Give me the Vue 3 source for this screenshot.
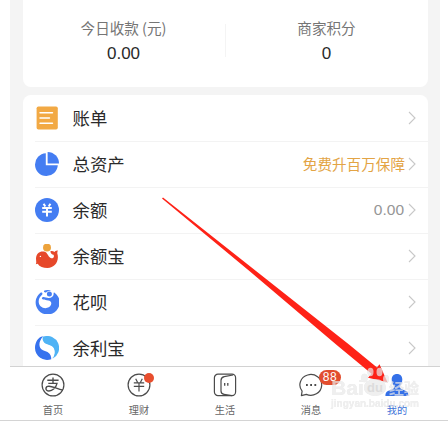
<script setup>
const rows = [
  { icon: 'bill', name: '账单' },
  { icon: 'asset', name: '总资产', note: '免费升百万保障', tone: 'gold' },
  { icon: 'balance', name: '余额', note: '0.00', tone: 'grey' },
  { icon: 'yuebao', name: '余额宝' },
  { icon: 'huabei', name: '花呗' },
  { icon: 'yulibao', name: '余利宝' },
]
const tabs = [
  { icon: 'home', name: '首页' },
  { icon: 'wealth', name: '理财', dot: true },
  { icon: 'life', name: '生活' },
  { icon: 'message', name: '消息', badge: '88' },
  { icon: 'mine', name: '我的', active: true },
]
</script>

<template>
  <div class="screen">
    <main class="content">
      <section class="card stats">
        <div class="stat">
          <span class="stat-label">今日收款<span class="unit">(元)</span></span>
          <span class="stat-value">0.00</span>
        </div>
        <i class="split"></i>
        <div class="stat">
          <span class="stat-label">商家积分</span>
          <span class="stat-value">0</span>
        </div>
      </section>

      <section class="card list">
        <div v-for="row in rows" :key="row.icon" class="row">
          <svg class="row-icon" viewBox="0 0 24 24">
            <g v-if="row.icon === 'bill'">
              <rect x="1.6" y="0.5" width="21.2" height="23" rx="1.8" fill="#f2a944" />
              <path d="M5 6.8H17.5M5 12H14.5M5 17.2H17.5" stroke="#fff" stroke-width="1.4" stroke-linecap="round" />
            </g>
            <g v-else-if="row.icon === 'asset'" fill="#447df2">
              <path d="M10.8 1.2A11.4 11.4 0 1 0 22.8 13.2H10.8Z" />
              <path d="M12.6 0A11.4 11.4 0 0 1 24 11.4H12.6Z" />
            </g>
            <g v-else-if="row.icon === 'balance'">
              <circle cx="12" cy="12" r="12" fill="#447df2" />
              <path d="M8.6 5.8L10.3 8.6M15.4 5.8L13.7 8.6M7.2 10H16.8M7.2 13.8H16.8M12 9.5V18.5" stroke="#fff" stroke-width="2" fill="none" />
            </g>
            <g v-else-if="row.icon === 'yuebao'">
              <circle cx="12" cy="3.6" r="4" fill="#eda33c" />
              <path d="M1 14.5C1.2 9.5 5 6.8 9 7.6C13 8.4 13.3 14 16.3 14.2C18.8 14.3 19.5 12.2 18.5 10.8C17 10.5 15.5 9.4 15.4 7.2C17 6.8 18.5 7.2 19.5 8.1C20 7 21.2 6.2 22.8 6.5C22.4 7.8 22.2 8.6 22.3 9.6C24.6 16.5 20 24 12.5 24C8 24 4.6 22.6 2.7 19.7L.8 20.2C1.7 18.5 1 17 1 14.5Z" fill="#e6482a" />
              <circle cx="5.4" cy="12.4" r=".7" fill="#fff" />
            </g>
            <g v-else-if="row.icon === 'huabei'" fill="#447df2">
              <path d="M5.8 2.6C7.4 2.2 8 3.8 6.8 5C3.2 8.2 2.6 13.2 5.6 16.2C8.8 19.4 14.6 18.4 16 14.8C16.9 12.4 15.6 11 13.4 10.6C11 10.1 9.6 9.3 8.2 9.4C6.6 9.4 6.4 7.4 8 7C10 6.8 11.4 8 13.6 8C17 8 19 6.2 18.6 3.4C18.5 2.6 18.9 2.2 19.6 2.7A12 12 0 1 1 5.8 2.6Z" />
              <circle cx="14.4" cy="3.9" r="2.5" />
              <path d="M9.4 .5A12 12 0 0 1 16.4 .8C14 .6 12.2 1.6 11 2.4C9.5 3.2 8.2 1.4 9.4 .5Z" />
            </g>
            <g v-else>
              <path d="M8.3.6C4-.1 0 6 0 12A12 12 0 0 0 16.2 23.2C18.6 20.2 18.3 16.5 15.8 15.2L9 12.7C3.8 10.5 5.4 3.5 8.3.6Z" fill="#3672ee" />
              <path d="M8.3.6A12 12 0 0 1 17.5 22.7C21 17.7 20 11.5 15 9.7L11 8.2C6.8 6.5 6 3.5 8.3.6Z" fill="#4fb3f5" />
              <path d="M7.7 1C3.4 5.4 3.2 12.3 8 14.3L12.5 16C15.5 17.6 16.4 20.6 16.2 23.4C20.7 18.5 20.8 11.7 16 9.7L11.5 8C8 6.6 7.2 3.4 7.7 1Z" fill="#fff" />
            </g>
          </svg>
          <div class="row-body">
            <span class="row-name">{{ row.name }}</span>
            <span v-if="row.note" class="note" :class="row.tone">{{ row.note }}</span>
            <svg class="chevron" viewBox="0 0 8 14"><path d="M1 1L7 7L1 13" /></svg>
          </div>
        </div>
      </section>
    </main>

    <nav class="tabbar">
      <div v-for="tab in tabs" :key="tab.icon" class="tab" :class="{ active: tab.active }">
        <div class="tab-icon">
          <svg viewBox="0 0 24 24" fill="none" stroke="#4b4b4b" stroke-width="1.2">
            <g v-if="tab.icon === 'home'">
              <circle cx="12" cy="12" r="10.9" />
              <path d="M12 4.6V10M6.3 7.2H17.6M7.3 10.3H16C14.8 15.5 11 18 8 18C3.8 18 4 13.3 8 13.2C12 13.2 16.5 16.3 22 17.1" stroke-width="1.35" />
            </g>
            <g v-else-if="tab.icon === 'wealth'">
              <circle cx="12" cy="12" r="10.9" />
              <path d="M8.7 5.8L10.5 9.3M15.3 5.8L13.5 9.3M6.8 9.8H17.2M6.8 13.3H17.2M12 9.8V18.5" />
            </g>
            <g v-else-if="tab.icon === 'life'">
              <rect x="1.4" y="1.2" width="21.2" height="21.4" rx="3.6" />
              <path d="M20 2L11.2 3.7Q8 4.5 8 7.5V18Q8 20.8 11 21.3L19 22.6" />
              <path d="M11.7 10V12.8M14.8 10V12.8" stroke-width="1.3" />
            </g>
            <g v-else-if="tab.icon === 'message'">
              <path d="M2.4 22.6L3.1 18.2A10.9 10.4 0 1 1 7.3 21.4Z" stroke-linejoin="round" />
              <path d="M7 12H8.8M11.2 12H13M15.4 12H17.2" stroke-width="1.8" />
            </g>
            <g v-else fill="#3470e8" stroke="none">
              <path d="M12 1C8.7 1 6.7 3.2 6.7 6.5C6.7 9.5 8 12 9.3 13C9.3 15 8.5 15.8 6.5 16.5C3 17.7.4 18.5.4 23H23.6C23.6 18.5 21 17.7 17.5 16.5C15.5 15.8 14.7 15 14.7 13C16 12 17.3 9.5 17.3 6.5C17.3 3.2 15.3 1 12 1Z" />
            </g>
          </svg>
          <i v-if="tab.dot" class="dot"></i>
          <b v-if="tab.badge" class="badge">{{ tab.badge }}</b>
        </div>
        <span class="tab-name">{{ tab.name }}</span>
      </div>
    </nav>

    <svg class="overlay" viewBox="0 0 448 421">
      <path d="M162 198.5L163 197.4L349 344.5L377 367.5L379.5 364.2L387.5 382.3L368 377.7L371.5 373.7L337 345.3L250 271.5Z" fill="#fe2217" />
      <g class="mark">
        <text class="mark-brand" x="331" y="394.5" textLength="33" lengthAdjust="spacingAndGlyphs">Bai</text>
        <ellipse cx="375" cy="387.5" rx="11" ry="8.5" />
        <ellipse cx="364.5" cy="378" rx="3.2" ry="4.2" />
        <ellipse cx="370.5" cy="372" rx="3" ry="4.2" />
        <ellipse cx="379.5" cy="372" rx="3" ry="4.2" />
        <ellipse cx="386" cy="379" rx="3" ry="4" />
        <text class="mark-cn" x="389" y="394" textLength="30">经验</text>
        <text class="mark-url" x="331" y="406.5" textLength="88" lengthAdjust="spacingAndGlyphs">jingyan.baidu.com</text>
      </g>
      <text class="mark-du" x="367" y="392">du</text>
    </svg>
  </div>
</template>

<style>
body {
  margin: 0;
  background: #fff;
}
</style>

<style scoped>
.screen {
  position: relative;
  box-sizing: border-box;
  display: flex;
  flex-direction: column;
  height: 421px;
  padding: 0 8px 0 10px;
  overflow: hidden;
  border-bottom: 1px solid #d4d4d4;
  background: #fff;
  color: #2a2a2a;
  font-family: "Noto Sans CJK SC", sans-serif;
  font-weight: 400;
}
.content {
  box-sizing: border-box;
  display: flex;
  flex-direction: column;
  gap: 8px;
  height: 366px;
  padding: 0 12.5px;
  overflow: hidden;
  background: #f4f4f4;
}
.card {
  flex: none;
  background: #fff;
}
.stats {
  box-sizing: border-box;
  display: flex;
  height: 87px;
  padding-top: 17px;
  border-radius: 0 0 8px 8px;
}
.stat {
  display: flex;
  flex: 1;
  flex-direction: column;
  align-items: center;
}
.stat-label {
  color: #757575;
  font-size: 14.6px;
  line-height: 21px;
}
.unit {
  margin-left: 3px;
}
.stat-value {
  font-family: "Liberation Sans", sans-serif;
  font-size: 17px;
  line-height: 31px;
}
.split {
  width: 1px;
  height: 33px;
  margin-top: 7px;
  background: #f4f4f4;
}
.list {
  border-radius: 8px 8px 0 0;
}
.row {
  display: flex;
  gap: 13.5px;
  align-items: center;
  height: 46px;
  padding-left: 12.5px;
}
.row-icon {
  flex: none;
  width: 24px;
  height: 24px;
}
.row-body {
  display: flex;
  flex: 1;
  align-items: center;
  height: 100%;
  padding-right: 11.5px;
}
.row + .row {
  background: linear-gradient(#f3f3f3, #f3f3f3) 12.5px 0 / 100% 1px no-repeat;
}
.row-name {
  flex: 1;
  padding-bottom: 2px;
  font-size: 17.4px;
}
.note {
  margin-right: 3px;
  padding-bottom: 2px;
  font-size: 14.6px;
}
.gold {
  color: #e3a445;
}
.grey {
  margin-right: 4px;
  padding-bottom: 0;
  color: #969696;
  font-family: "Liberation Sans", sans-serif;
  font-size: 15.5px;
}
.chevron {
  width: 8px;
  height: 14px;
  fill: none;
  stroke: #c8c8c8;
  stroke-width: 1.1;
}
.tabbar {
  display: flex;
  flex: 1;
  border-top: 1px solid #d2d2d2;
}
.tab {
  display: flex;
  flex: 1;
  flex-direction: column;
  align-items: center;
  padding-top: 6px;
}
.tab-icon {
  position: relative;
  width: 24px;
  height: 24px;
}
.tab-icon svg {
  display: block;
  width: 24px;
  height: 24px;
}
.dot {
  position: absolute;
  top: 0;
  right: -3px;
  width: 10px;
  height: 10px;
  border-radius: 50%;
  background: #e84e2e;
}
.badge {
  position: absolute;
  top: -3px;
  left: 20px;
  width: 22px;
  height: 15px;
  border-radius: 8px;
  background: #e24d2e;
  color: #fff;
  font-family: "Liberation Sans", sans-serif;
  font-size: 12px;
  font-weight: 400;
  line-height: 15px;
  letter-spacing: 0.5px;
  text-align: center;
}
.tab-name {
  margin-top: 5px;
  color: #666;
  font-size: 10.2px;
  line-height: 16px;
}
.active .tab-name {
  color: #3d72d8;
}
.overlay {
  position: absolute;
  inset: 0;
  width: 448px;
  height: 421px;
}
.mark {
  fill: rgba(255, 255, 255, 0.6);
  font-family: "Liberation Sans", sans-serif;
  font-weight: 700;
  filter: drop-shadow(0 0 0.7px rgba(120, 120, 120, 0.5));
}
.mark-brand {
  font-size: 20px;
}
.mark-cn {
  font-family: "Noto Sans CJK SC", sans-serif;
  font-size: 15px;
}
.mark-url {
  font-size: 10.5px;
}
.mark-du {
  fill: #dcdcdc;
  font-family: "Liberation Sans", sans-serif;
  font-size: 13px;
  font-weight: 700;
}
</style>
